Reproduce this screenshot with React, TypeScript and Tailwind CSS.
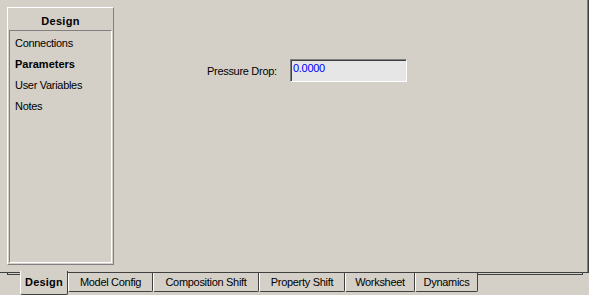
import React from "react";

const tabs = [
  { label: "Design", w: 48 },
  { label: "Model Config", w: 85 },
  { label: "Composition Shift", w: 106 },
  { label: "Property Shift", w: 86 },
  { label: "Worksheet", w: 70 },
  { label: "Dynamics", w: 63 },
];

const items = ["Connections", "Parameters", "User Variables", "Notes"];

const App = () => {
  return (
    <div
      className="w-[589px] h-[295px] bg-[#d4d0c8] flex flex-col overflow-hidden text-[11px] text-black"
      style={{ fontFamily: '"Liberation Sans", Arial, sans-serif' }}
    >
      {/* page */}
      <div className="h-[273px] flex border-r border-b border-[#404040]">
        <div className="flex flex-1 border-r border-[#808080]">
          {/* side navigator */}
          <div className="ml-[7px] mt-[7px] w-[107px] h-[258px] flex flex-col border-l border-t border-white border-r border-b border-r-[#808080] border-b-[#808080]">
            <div className="h-[22px] pt-[5px] leading-[16px] text-center font-bold tracking-[0.3px]">
              Design
            </div>
            <div className="mx-[1px] mb-[1px] flex-1 border-l border-t border-[#808080] border-r border-b border-r-white border-b-white pt-[2px] pl-[5px]">
              {items.map((it) => (
                <div
                  key={it}
                  className={
                    it === "Parameters"
                      ? "h-[21px] leading-[21px] font-bold"
                      : "h-[21px] leading-[21px] tracking-[-0.3px]"
                  }
                >
                  {it}
                </div>
              ))}
            </div>
          </div>

          {/* content */}
          <div className="flex-1">
            <div className="mt-[59px] ml-[93px] flex items-center">
              <span className="w-[83px] tracking-[-0.3px] pt-[1px]">Pressure Drop:</span>
              <div className="w-[117px] h-[23px] bg-[#e6e6e6] border-l border-t border-[#808080] border-r border-b border-r-white border-b-white">
                <div className="border-l border-t border-[#404040] h-full pl-[1px] pt-[1px] leading-[13px] text-[#0000ff] tracking-[-0.3px]">
                  0.0000
                </div>
              </div>
            </div>
          </div>
        </div>
      </div>

      {/* tab strip */}
      <div className="flex h-[22px]">
        <div className="ml-[7px] w-[13px] h-[3px] border-l border-b border-[#404040] -mt-[1px]" />
        {tabs.map((t, i) =>
          i === 0 ? (
            <div
              key={t.label}
              style={{ width: t.w }}
              className="-mt-[2px] h-[24px] bg-[#d4d0c8] border-l border-white border-r border-b border-r-[#404040] border-b-[#404040] rounded-bl-[3px] rounded-br-[2px] pl-[4px] leading-[22px] font-bold tracking-[0.2px]"
            >
              {t.label}
            </div>
          ) : (
            <div
              key={t.label}
              style={{ width: t.w }}
              className="h-[19px] border-l border-white border-r border-b border-r-[#404040] border-b-[#404040] rounded-b-[2px] text-center leading-[18px] tracking-[-0.3px]"
            >
              {t.label}
            </div>
          )
        )}
        <div className="w-[105px] h-[3px] border-b border-r border-[#404040] -mt-[1px]" />
      </div>
    </div>
  );
};

export default App;
